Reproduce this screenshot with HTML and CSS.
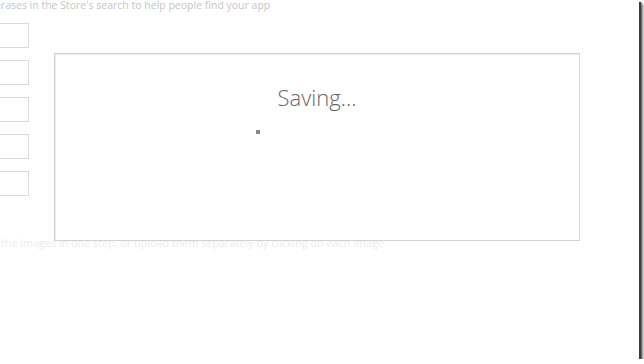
FILE: index.html
```html
<!DOCTYPE html>
<html lang="en">
    <head>
        <meta charset="UTF-8" />
        <title>Saving</title>
        <link rel="stylesheet" href="styles.css">
    </head>
    <body>
        <div class="shot">
            <div class="form">
                <p class="hint">phrases in the Store's search to help people find your app</p>
                <div class="keywords">
                    <input type="text" />
                    <input type="text" />
                    <input type="text" />
                    <input type="text" />
                    <input type="text" />
                </div>
                <p class="hint faint">the images in one step, or upload them separately by clicking on each image</p>
            </div>

            <div class="saving-box">
                <h2>Saving...</h2>
                <span class="progress-dot"></span>
            </div>
        </div>
    </body>
</html>
```

FILE: styles.css
```css
* {
    box-sizing: border-box;
}
body {
    margin: 0;
    background: #fff;
    font-family: "Open Sans", "Liberation Sans", sans-serif;
}
.shot {
    position: relative;
    width: 639px;
    height: 359px;
    overflow: hidden;
    background: #fff;
    box-shadow: 2px 2px 0 #3c3c3c, 3px 3px 2px rgba(0, 0, 0, 0.6), 4px 4px 4px rgba(0, 0, 0, 0.35);
}

.form {
    display: flex;
    flex-direction: column;
}
.hint {
    margin: 0;
    font-size: 10.5px;
    line-height: 14px;
    color: #c6c6c6;
    white-space: nowrap;
}
.form > .hint:first-child {
    margin-top: -2px;
    margin-left: -12px;
}
.hint.faint {
    margin-top: 40px;
    margin-left: 1px;
    font-size: 10.8px;
    color: #ebebeb;
}
.keywords {
    display: flex;
    flex-direction: column;
    gap: 12px;
    margin-top: 11px;
}
.keywords input {
    width: 60px;
    height: 25px;
    margin-left: -31px;
    border: 1px solid #dadada;
    outline: none;
}

.saving-box {
    position: absolute;
    top: 53px;
    left: 54px;
    width: 526px;
    height: 188px;
    border: 1px solid #d2d2d2;
    box-shadow: inset 1px 1px 0 #eee;
    background: #fff;
}
.saving-box h2 {
    margin: 28px 0 0;
    font-size: 22px;
    font-weight: 300;
    line-height: 30px;
    color: #666;
    text-align: center;
}
.progress-dot {
    position: absolute;
    top: 76px;
    left: 201px;
    width: 4px;
    height: 4px;
    background: #8a8a8a;
}
```
